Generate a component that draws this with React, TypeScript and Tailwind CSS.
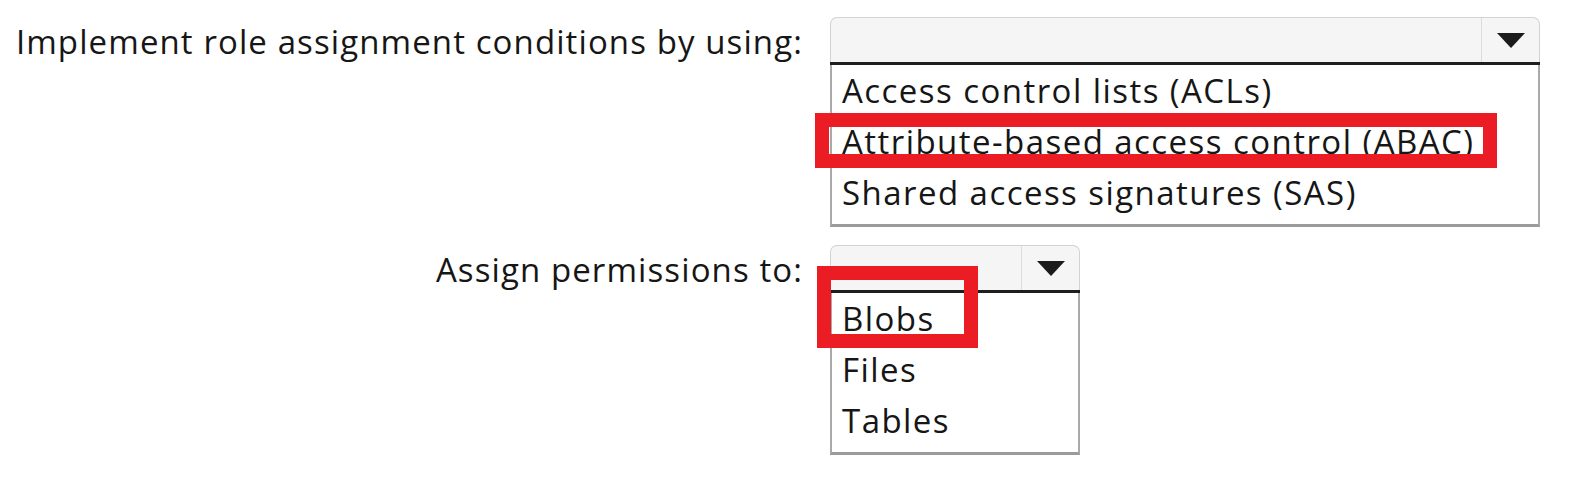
import React from "react";

type DropProps = {
  width: string;
  items: string[];
  mark: string;
};

function Dropdown({ width, items, mark }: DropProps) {
  return (
    <div className={`relative ${width}`}>
      <div className="flex h-[45px] rounded-t-[7px] border border-b-0 border-[#d2d2d2] bg-[#f5f5f5]">
        <div className="flex-1" />
        <div className="flex w-[58px] items-center justify-center border-l border-[#dcdcdc]">
          <svg width="28" height="15" viewBox="0 0 28 15">
            <polygon points="0,0 28,0 14,15" fill="#1b1b1b" />
          </svg>
        </div>
      </div>
      <div className="h-[3px] bg-[#1e1e1e]" />
      <ul className="border-x-2 border-b-[3px] border-x-[#a9a9a9] border-b-[#9b9b9b] bg-white pb-[6px] pl-[10px] text-[33px] leading-[51px] tracking-[1.45px]">
        {items.map((item) => (
          <li key={item} className="whitespace-nowrap">{item}</li>
        ))}
      </ul>
      <div className={`pointer-events-none absolute border-[14px] border-[#ec1c24] ${mark}`} />
    </div>
  );
}

export default function App() {
  return (
    <div className="h-[488px] w-[1574px] bg-white pt-[17px] font-['Open_Sans',sans-serif] font-medium text-[#161616]">
      <div className="flex items-start">
        <div className="w-[830px] whitespace-nowrap pr-[27px] pt-[2px] text-right text-[33px] leading-[45px] tracking-[1.1px]">
          Implement role assignment conditions by using:
        </div>
        <Dropdown
          width="w-[710px]"
          items={[
            "Access control lists (ACLs)",
            "Attribute-based access control (ABAC)",
            "Shared access signatures (SAS)",
          ]}
          mark="left-[-15px] top-[96px] h-[55px] w-[682px]"
        />
      </div>
      <div className="mt-[18px] flex items-start">
        <div className="w-[830px] whitespace-nowrap pr-[27px] pt-[2px] text-right text-[33px] leading-[45px] tracking-[1.1px]">
          Assign permissions to:
        </div>
        <Dropdown
          width="w-[250px]"
          items={["Blobs", "Files", "Tables"]}
          mark="left-[-13px] top-[21px] h-[82px] w-[161px]"
        />
      </div>
    </div>
  );
}
